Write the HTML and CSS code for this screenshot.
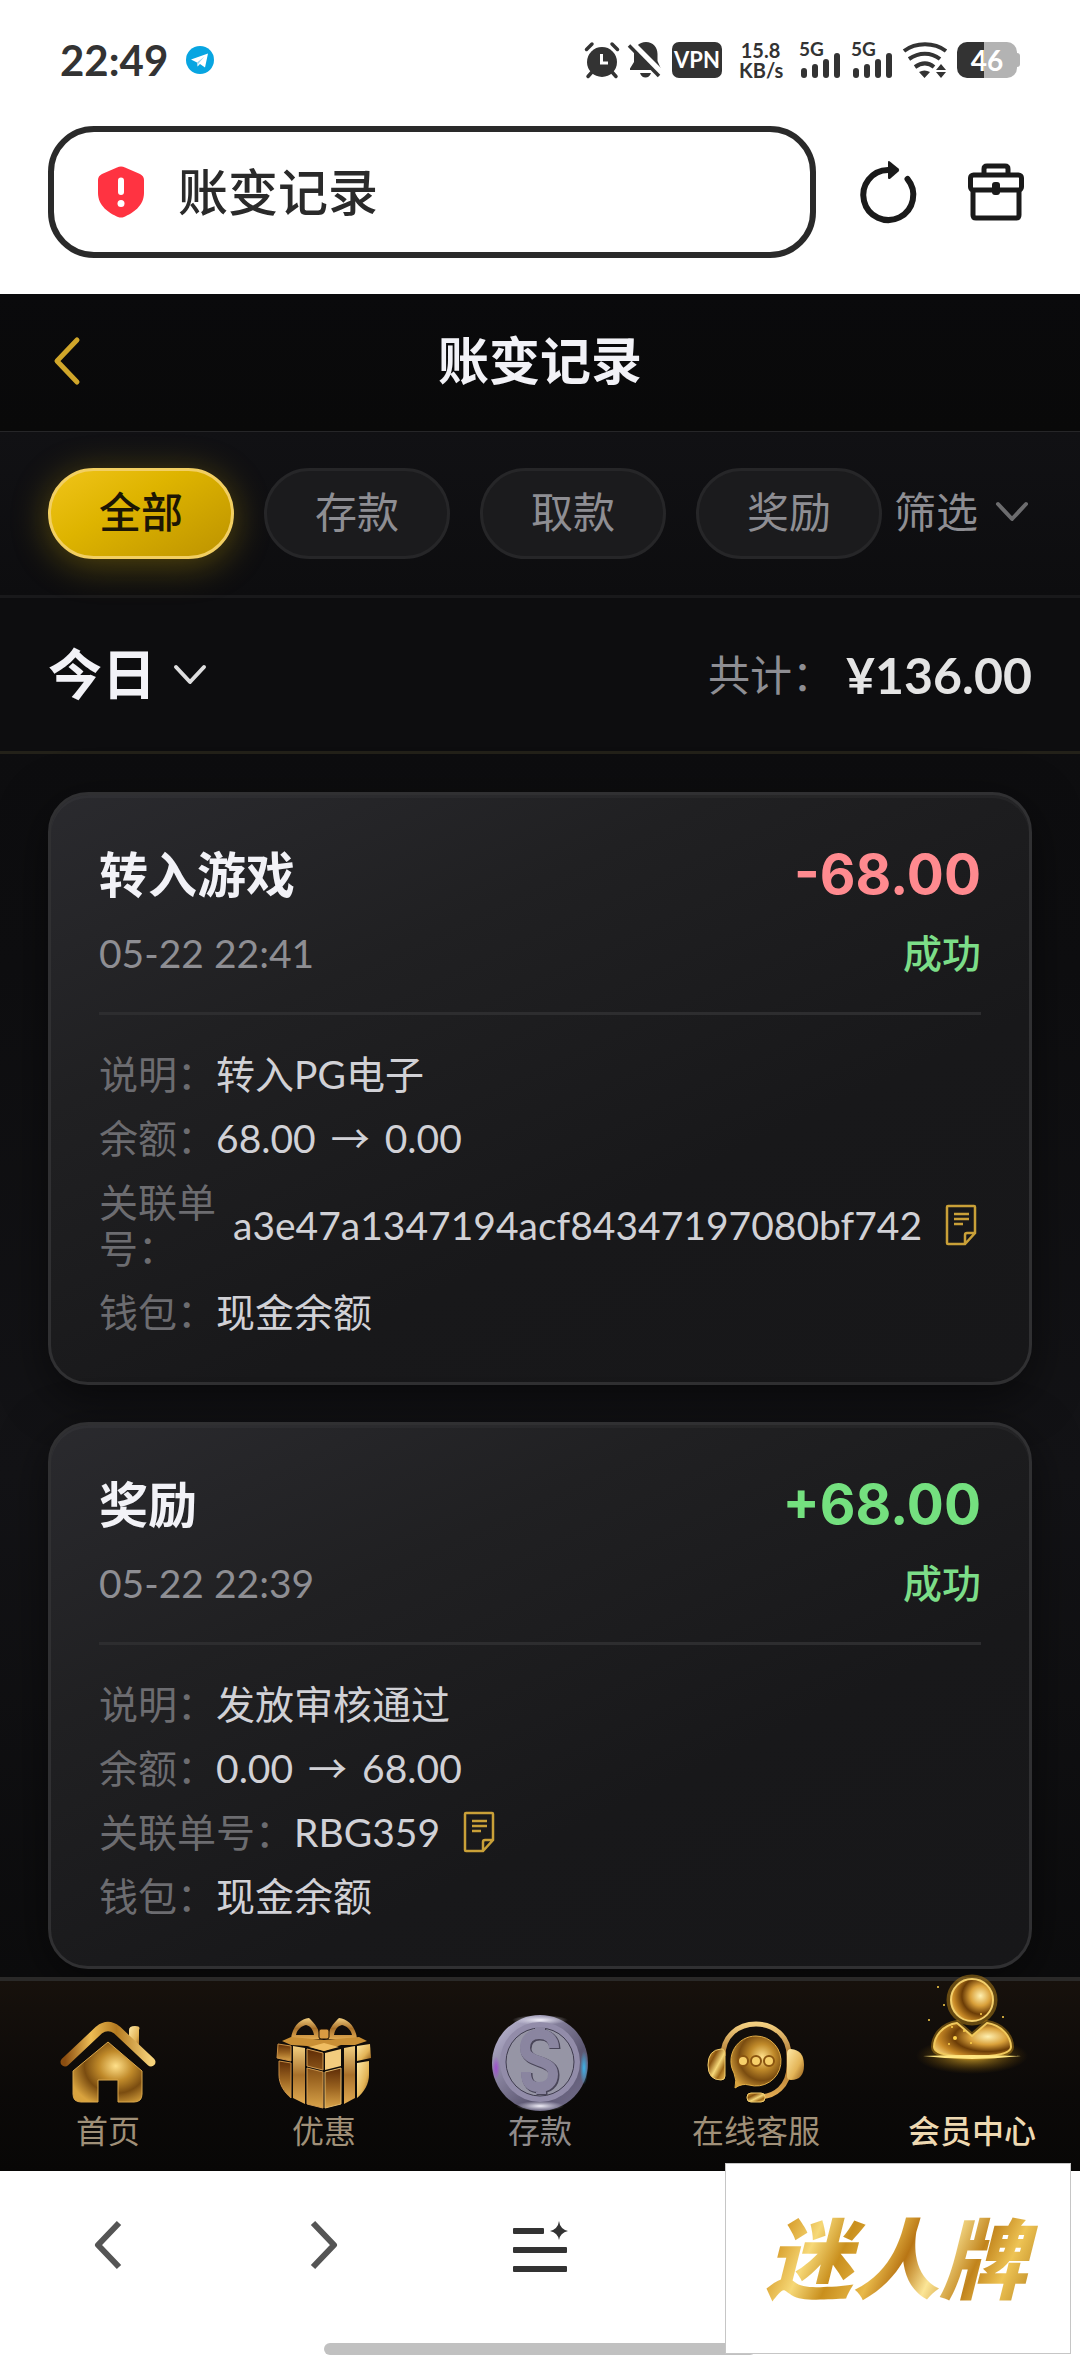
FILE: index.html
```
<!DOCTYPE html>
<html lang="zh-CN">
<head>
  <meta charset="UTF-8">
  <meta name="viewport" content="width=device-width, initial-scale=1.0">
  <title>账变记录</title>
  <link rel="stylesheet" href="styles.css">
</head>
<body>

  <!-- Phone status bar -->
  <div class="status-bar">
    <span class="time">22:49</span>
    <svg class="telegram" width="28" height="28" viewBox="0 0 28 28">
      <circle cx="14" cy="14" r="14" fill="#08a5e1"/>
      <path d="M5 13.5 22 7.5 19 21.5 14 18 11.5 20.5 11 16.5Z" fill="#fff"/>
      <path d="M11 16.5 18.5 10.5 12.5 17.5 11.5 20.5Z" fill="#9bd3ee"/>
    </svg>
    <div class="status-icons">
      <svg width="34" height="36" viewBox="0 0 34 36">
        <circle cx="17" cy="20" r="15" fill="#333"/>
        <path d="M1.500 7.500 7 2M32.500 7.500 27 2M7 30 3 34.500M27 30 31 34.500" stroke="#333" stroke-width="3.500" stroke-linecap="round"/>
        <path d="M16.500 12V21H23" fill="none" stroke="#fff" stroke-width="3"/>
      </svg>
      <svg width="33" height="36" viewBox="0 0 33 36">
        <path d="M17 0C24 0 28.500 5 28.500 12V19L32 27V28H1V26.500L5 20V12C5 5 10 0 17 0ZM11 31H22C21 34 19 35.500 16.500 35.500S12 34 11 31Z" fill="#333"/>
        <path d="M2 1 33 32" stroke="#fff" stroke-width="7"/>
        <path d="M0 3.500 30 34" stroke="#333" stroke-width="3.500"/>
      </svg>
      <span class="vpn">VPN</span>
      <span class="speed">15.8<br>KB/s</span>
      <svg class="signal" width="42" height="36" viewBox="0 0 42 36">
        <text x="0" y="14">5G</text>
        <rect x="2" y="26" width="6" height="10" rx="3"/>
        <rect x="13" y="22" width="6" height="14" rx="3"/>
        <rect x="24" y="17" width="6" height="19" rx="3"/>
        <rect x="35" y="11" width="6" height="25" rx="3"/>
      </svg>
      <svg class="signal" width="42" height="36" viewBox="0 0 42 36">
        <text x="0" y="14">5G</text>
        <rect x="2" y="26" width="6" height="10" rx="3"/>
        <rect x="13" y="22" width="6" height="14" rx="3"/>
        <rect x="24" y="17" width="6" height="19" rx="3"/>
        <rect x="35" y="11" width="6" height="25" rx="3"/>
      </svg>
      <svg width="44" height="36" viewBox="0 0 44 36">
        <g fill="none" stroke="#333" stroke-width="4">
          <path d="M1 9C13 0 31 0 43 9"/>
          <path d="M6 17C16 10 28 10 37 17"/>
          <path d="M12 25C19 20 25 20 31 25"/>
        </g>
        <path d="M16 30Q21.500 27 27 30L21.500 36ZM33 28 38 22 43 28ZM33 30 38 36 43 30Z" fill="#333"/>
      </svg>
      <span class="battery">46</span>
    </div>
  </div>

  <!-- Browser address row -->
  <div class="address-row">
    <label class="address">
      <svg width="46" height="52" viewBox="0 0 46 52">
        <path d="M19 1.500Q23-.5 27 1.500L42 8Q46 10 46 14V27C46 40 35 47 26 51Q23 52 20 51C11 47 0 40 0 27V14Q0 10 4 8Z" fill="#ff3341"/>
        <path d="M23 14.500V26" stroke="#fff" stroke-width="6" stroke-linecap="round"/>
        <circle cx="23" cy="37.500" r="3.500" fill="#fff"/>
      </svg>
      <input type="text" value="账变记录" aria-label="地址">
    </label>
    <button class="tool" aria-label="刷新">
      <svg width="56" height="62" viewBox="0 0 56 62">
        <path d="M28 9A25 25 0 1 0 47.500 18" fill="none" stroke="#1a1a1a" stroke-width="6" stroke-linecap="round"/>
        <path d="M28 1.500Q28-1 30.500 1L38.500 7.500Q40 9 38.500 10.500L30.500 17.500Q28 19 28 16.500Z" fill="#1a1a1a"/>
      </svg>
    </button>
    <button class="tool" aria-label="工具箱">
      <svg width="56" height="58" viewBox="0 0 56 58" fill="none" stroke="#1a1a1a" stroke-width="5">
        <path d="M16 11V6Q16 3 19 3H37Q40 3 40 6V11"/>
        <rect x="2.500" y="12" width="51" height="15" rx="3"/>
        <path d="M5 27V52Q5 55 8 55H48Q51 55 51 52V27"/>
        <rect x="24" y="19" width="8" height="13" rx="3" fill="#1a1a1a" stroke="none"/>
      </svg>
    </button>
  </div>

  <main class="app">
    <header class="header">
      <button class="back" aria-label="返回">
        <svg width="26" height="46" viewBox="0 0 26 46"><path d="M23 2 3 23 23 44" fill="none" stroke="#d0a62a" stroke-width="5" stroke-linecap="round" stroke-linejoin="round"/></svg>
      </button>
      <h1>账变记录</h1>
    </header>

    <div class="tabs">
      <button class="tab active">全部</button>
      <button class="tab">存款</button>
      <button class="tab">取款</button>
      <button class="tab">奖励</button>
      <button class="filter">筛选
        <svg width="32" height="20" viewBox="0 0 32 20"><path d="M2 2 16 17 30 2" fill="none" stroke="#6c6c6e" stroke-width="4" stroke-linecap="round" stroke-linejoin="round"/></svg>
      </button>
    </div>

    <div class="summary">
      <button class="day">今日
        <svg width="32" height="20" viewBox="0 0 32 20"><path d="M2 2 16 17 30 2" fill="none" stroke="#dededf" stroke-width="4" stroke-linecap="round" stroke-linejoin="round"/></svg>
      </button>
      <span class="total-label">共计：</span>
      <span class="total">¥136.00</span>
    </div>

    <div class="records">
      <article class="card">
        <div class="card-head">
          <h2>转入游戏</h2>
          <span class="amount minus">-68.00</span>
          <time>05-22 22:41</time>
          <span class="state">成功</span>
        </div>
        <dl>
          <div class="row"><dt>说明：</dt><dd>转入PG电子</dd></div>
          <div class="row"><dt>余额：</dt><dd>68.00 <span class="arrow">→</span> 0.00</dd></div>
          <div class="row long"><dt>关联单号：</dt><dd>a3e47a1347194acf84347197080bf742</dd>
            <button class="copy" aria-label="复制">
              <svg width="32" height="42" viewBox="0 0 32 42"><path d="M3 2H29Q30 2 30 3V29L20 40H3Q2 40 2 39V3Q2 2 3 2ZM20 40V31Q20 29 22 29H30M9 10H24M9 15H24M9 20H18" fill="none" stroke="#c9a038" stroke-width="2.500"/></svg>
            </button>
          </div>
          <div class="row"><dt>钱包：</dt><dd>现金余额</dd></div>
        </dl>
      </article>

      <article class="card">
        <div class="card-head">
          <h2>奖励</h2>
          <span class="amount plus">+68.00</span>
          <time>05-22 22:39</time>
          <span class="state">成功</span>
        </div>
        <dl>
          <div class="row"><dt>说明：</dt><dd>发放审核通过</dd></div>
          <div class="row"><dt>余额：</dt><dd>0.00 <span class="arrow">→</span> 68.00</dd></div>
          <div class="row"><dt>关联单号：</dt><dd>RBG359</dd>
            <button class="copy" aria-label="复制">
              <svg width="32" height="42" viewBox="0 0 32 42"><path d="M3 2H29Q30 2 30 3V29L20 40H3Q2 40 2 39V3Q2 2 3 2ZM20 40V31Q20 29 22 29H30M9 10H24M9 15H24M9 20H18" fill="none" stroke="#c9a038" stroke-width="2.500"/></svg>
            </button>
          </div>
          <div class="row"><dt>钱包：</dt><dd>现金余额</dd></div>
        </dl>
      </article>
    </div>
  </main>

  <nav class="tabbar">
    <a href="#">
      <svg width="98" height="98" viewBox="0 0 98 98">
        <defs>
          <linearGradient id="gold" x1="0" y1="0" x2="1" y2="1">
            <stop offset="0" stop-color="#e0a83a"/><stop offset=".3" stop-color="#8a5410"/>
            <stop offset=".55" stop-color="#f6d879"/><stop offset=".75" stop-color="#a06a18"/><stop offset="1" stop-color="#f0c057"/>
          </linearGradient>
          <linearGradient id="goldDark" x1="0" y1="0" x2="0" y2="1">
            <stop offset="0" stop-color="#5e2c06"/><stop offset=".5" stop-color="#9a6320"/><stop offset="1" stop-color="#d9a349"/>
          </linearGradient>
          <linearGradient id="goldLight" x1="0" y1="0" x2="1" y2="1">
            <stop offset="0" stop-color="#ffe9a6"/><stop offset=".6" stop-color="#e3b457"/><stop offset="1" stop-color="#8c5514"/>
          </linearGradient>
          <linearGradient id="goldBand" x1="0" y1="0" x2="0" y2="1">
            <stop offset="0" stop-color="#f3cf80"/><stop offset=".5" stop-color="#a8702a"/><stop offset="1" stop-color="#e2ab52"/>
          </linearGradient>
          <radialGradient id="houseGold" cx=".62" cy=".4" r=".7">
            <stop offset="0" stop-color="#ffe08a"/><stop offset=".35" stop-color="#c08a2a"/>
            <stop offset=".65" stop-color="#7a4c10"/><stop offset="1" stop-color="#d9a33e"/>
          </radialGradient>
          <linearGradient id="roof" x1="0" y1="1" x2="1" y2="1">
            <stop offset="0" stop-color="#8a4d10"/><stop offset=".3" stop-color="#eebd54"/>
            <stop offset=".6" stop-color="#b47a20"/><stop offset="1" stop-color="#f5d27a"/>
          </linearGradient>
        </defs>
        <path d="M70 16Q70 12 76 12T80 16V36L70 27Z" fill="url(#goldLight)"/>
        <path d="M6 48 40 16Q49 9 58 16L92 48" fill="none" stroke="url(#roof)" stroke-width="9" stroke-linecap="round"/>
        <path d="M49 28 83 57V80Q83 88 75 88H59V66H39V88H22Q14 88 14 80V57Z" fill="url(#houseGold)" stroke="#d9a64a" stroke-width="1"/>
      </svg>
      <span>首页</span>
    </a>
    <a href="#">
      <svg width="98" height="98" viewBox="0 0 98 98">
        <path d="M45 25H16C17 13 25 5 34 4 39 9 45 15 45 25ZM39 21C38 15 35 12 31 11 26 12 22 16 21 21Z" fill="url(#goldBand)" fill-rule="evenodd"/>
        <path d="M53 25H82C81 13 73 5 64 4 59 9 53 15 53 25ZM59 21C60 15 63 12 67 11 72 12 76 16 77 21Z" fill="url(#goldBand)" fill-rule="evenodd"/>
        <rect x="44" y="15" width="10" height="10" rx="2" fill="#d99b42" stroke="#1a0e04"/>
        <path d="M7 27 16 23 49 26 84 23 92 27 80 31 66 31 49 37 32 32 16 31Z" fill="#c98f35"/>
        <path d="M3 30 16 32V47L2 44Z" fill="url(#goldDark)" stroke="#c98f44"/>
        <path d="M95 30 82 32V47L96 44Z" fill="url(#goldLight)"/>
        <path d="M4 47 16 49V84C9 78 4 70 4 61Z" fill="url(#goldDark)" stroke="#c98f44"/>
        <path d="M94 47 82 49V84C89 78 94 70 94 61Z" fill="url(#goldLight)"/>
        <path d="M18 32 30 34V90L18 84Z" fill="url(#goldBand)"/>
        <path d="M80 32 69 34V90L80 84Z" fill="url(#goldBand)"/>
        <path d="M32 35 48 39V56L32 52ZM32 54 48 58V94L32 90Z" fill="url(#goldDark)" stroke="#d39b50"/>
        <path d="M66 35 50 39V56L66 52Z" fill="#f3cc7e"/>
        <path d="M66 54 50 58V94L66 90Z" fill="url(#goldDark)" stroke="#e5ba6b"/>
        <path d="M34 33 49 29 64 33 49 37Z" fill="#efbd62"/>
      </svg>
      <span>优惠</span>
    </a>
    <a href="#" class="silver">
      <svg width="98" height="98" viewBox="0 0 98 98">
        <defs>
          <linearGradient id="rim" x1="0" y1="0" x2="1" y2="1">
            <stop offset="0" stop-color="#c9c5df"/><stop offset=".3" stop-color="#8f8aa6"/>
            <stop offset=".65" stop-color="#5d5872"/><stop offset="1" stop-color="#77718f"/>
          </linearGradient>
          <radialGradient id="purple"><stop offset="0" stop-color="#a04fd0"/><stop offset="1" stop-color="#a04fd0" stop-opacity="0"/></radialGradient>
          <radialGradient id="cyan"><stop offset="0" stop-color="#3bb4ea"/><stop offset="1" stop-color="#3bb4ea" stop-opacity="0"/></radialGradient>
          <radialGradient id="shine"><stop offset="0" stop-color="#f3f1fa"/><stop offset="1" stop-color="#d5d3e5" stop-opacity="0"/></radialGradient>
        </defs>
        <circle cx="49" cy="49" r="48" fill="url(#rim)"/>
        <ellipse cx="5" cy="54" rx="4" ry="12" fill="url(#purple)"/>
        <ellipse cx="93" cy="54" rx="4" ry="17" fill="url(#cyan)"/>
        <ellipse cx="49" cy="92" rx="24" ry="5" fill="url(#shine)"/>
        <ellipse cx="49" cy="6" rx="28" ry="5" fill="url(#shine)"/>
        <circle cx="49" cy="48" r="40" fill="#928ca9"/>
        <circle cx="49" cy="48" r="34" fill="#9695a5" stroke="#3f3c4e" stroke-width="1"/>
        <path d="M64 35C64 25 57 21 49 21S35 26 35 35C35 51 63 45 63 61 63 70 57 74 49 74S36 70 36 59M50 14V22M51 74V81" fill="none" stroke="#494558" stroke-width="11"/>
        <path d="M63 34C63 24 56 20 48 20S34 25 34 34C34 50 62 44 62 60 62 69 56 73 48 73S35 69 35 58M49 13V21M50 73V80" fill="none" stroke="#8a85a0" stroke-width="10"/>
      </svg>
      <span>存款</span>
    </a>
    <a href="#">
      <svg width="98" height="98" viewBox="0 0 98 98">
        <path d="M16 42C16 22 31 10 49 10S82 22 82 42V52C82 72 68 83 51 83" fill="none" stroke="url(#goldBand)" stroke-width="5"/>
        <path d="M14 35Q1 36 1 51T14 66Q18 66 18 62V40Q18 35 14 35Z" fill="url(#gold)" stroke="#f3cd6d"/>
        <path d="M84 35Q97 36 97 51T84 66Q80 66 80 62V40Q80 35 84 35Z" fill="url(#goldLight)"/>
        <path d="M49 22A25 25 0 1 1 42 71Q35 69 28 74 30 66 27 59A25 25 0 0 1 49 22Z" fill="url(#houseGold)" stroke="#e0ac45"/>
        <g fill="#f7d06a" stroke="#8a5410" stroke-width="2"><circle cx="36" cy="47" r="5"/><circle cx="49" cy="47" r="5"/><circle cx="62" cy="47" r="5"/></g>
        <rect x="40" y="79" width="18" height="9" rx="4" fill="url(#gold)" stroke="#f3cd6d"/>
      </svg>
      <span>在线客服</span>
    </a>
    <a href="#" class="current">
      <svg width="98" height="98" viewBox="0 0 98 98">
        <defs>
          <radialGradient id="glow"><stop offset="0" stop-color="#ffc93a" stop-opacity=".8"/><stop offset="1" stop-color="#8a5a00" stop-opacity="0"/></radialGradient>
          <radialGradient id="ball" cx=".7" cy=".4" r=".8">
            <stop offset="0" stop-color="#fff0b0"/><stop offset=".3" stop-color="#d9a03a"/>
            <stop offset=".55" stop-color="#6b3c06"/><stop offset=".8" stop-color="#c98a26"/><stop offset="1" stop-color="#f5d27a"/>
          </radialGradient>
        </defs>
        <ellipse cx="49" cy="42" rx="56" ry="18" fill="url(#glow)"/>
        <circle cx="49" cy="-14" r="23" fill="none" stroke="#b88418" stroke-opacity=".5" stroke-width="5"/>
        <circle cx="49" cy="-14" r="21" fill="url(#ball)" stroke="#f3cf6b" stroke-width="2"/>
        <path d="M34 9 49 22 64 9C78 11 88 22 88 33 88 38 80 42 49 43 18 42 11 38 11 33 11 22 20 11 34 9Z" fill="none" stroke="#b88418" stroke-opacity=".5" stroke-width="6"/>
        <path d="M34 9 49 22 64 9C78 11 88 22 88 33 88 38 80 42 49 43 18 42 11 38 11 33 11 22 20 11 34 9Z" fill="url(#ball)" stroke="#f0c85c" stroke-width="2"/>
        <path d="M0 42Q49 40 98 42 49 48 0 42Z" fill="#ffe680"/>
        <g fill="#ffd24a"><circle cx="21" cy="-9" r="1"/><circle cx="15" cy="-27" r="1"/><circle cx="6" cy="6" r="1"/><circle cx="29" cy="13" r="1"/><circle cx="32" cy="24" r="2"/><circle cx="41" cy="17" r="1"/><circle cx="48" cy="29" r="1"/><circle cx="80" cy="3" r="1"/><circle cx="26" cy="30" r="1"/><circle cx="58" cy="0" r="1"/></g>
      </svg>
      <span>会员中心</span>
    </a>
  </nav>

  <!-- Browser toolbar -->
  <div class="browser-bar">
    <button aria-label="后退">
      <svg width="28" height="48" viewBox="0 0 28 48"><path d="M25 2 4 24 25 46" fill="none" stroke="#555" stroke-width="6" stroke-linejoin="round"/></svg>
    </button>
    <button aria-label="前进">
      <svg width="28" height="48" viewBox="0 0 28 48"><path d="M3 2 24 24 3 46" fill="none" stroke="#555" stroke-width="6" stroke-linejoin="round"/></svg>
    </button>
    <button aria-label="菜单">
      <svg width="56" height="52" viewBox="0 0 56 52" fill="#333">
        <rect x="1" y="7" width="31" height="6" rx="1"/>
        <rect x="1" y="26" width="54" height="6" rx="1"/>
        <rect x="1" y="45" width="54" height="6" rx="1"/>
        <path d="M47 0Q48 8 56 10 48 12 47 19 46 12 38 10 46 8 47 0Z"/>
      </svg>
    </button>
    <div class="home-line"></div>
  </div>

  <div class="watermark"><span>迷人牌</span></div>

</body>
</html>
```
FILE: styles.css
```
* {
  box-sizing: border-box;
}
body {
  margin: 0;
  min-height: 100vh;
  display: flex;
  flex-direction: column;
  position: relative;
  background: #fff;
  font-family: Lato, "Noto Sans CJK SC", sans-serif;
  font-size: 39px;
  line-height: 46px;
  overflow-x: hidden;
}
button {
  padding: 0;
  border: 0;
  background: none;
  font: inherit;
  color: inherit;
}
svg {
  display: block;
  flex: none;
  overflow: visible;
}
h1, h2, dl, dd {
  margin: 0;
}

/* status bar */
.status-bar {
  display: flex;
  align-items: center;
  padding: 36px 60px 42px;
  height: 126px;
  color: #333;
}
.time {
  font-size: 42px;
  font-weight: 700;
}
.telegram {
  margin-left: 18px;
}
.status-icons {
  display: flex;
  align-items: center;
  gap: 10px;
  margin-left: auto;
}
.vpn {
  width: 50px;
  height: 36px;
  border-radius: 7px;
  background: #333;
  color: #fff;
  font-size: 22px;
  font-weight: 700;
  line-height: 36px;
  text-align: center;
}
.speed {
  width: 43px;
  margin: 0 7px;
  font-size: 20px;
  font-weight: 700;
  line-height: 20px;
  text-align: center;
}
.signal {
  fill: #333;
  font-size: 19px;
  font-weight: 700;
}
.battery {
  width: 60px;
  height: 36px;
  margin-right: 3px;
  border-radius: 10px;
  background: linear-gradient(90deg, #333 45%, #b3b3b3 45%);
  color: #fff;
  font-size: 28px;
  font-weight: 700;
  line-height: 36px;
  text-align: center;
  position: relative;
}
.battery::after {
  content: "";
  position: absolute;
  top: 11px;
  right: -3px;
  width: 3px;
  height: 14px;
  border-radius: 0 3px 3px 0;
  background: #b3b3b3;
}

/* address row */
.address-row {
  display: flex;
  align-items: center;
  padding: 0 56px 36px 48px;
}
.address {
  flex: 1;
  min-width: 0;
  height: 132px;
  display: flex;
  align-items: center;
  gap: 34px;
  padding: 0 44px;
  border: 6px solid #2a2a2a;
  border-radius: 46px;
}
.address input {
  flex: 1;
  min-width: 0;
  padding: 0;
  border: 0;
  outline: 0;
  background: none;
  color: #2a2a2a;
  font: inherit;
  font-size: 50px;
  font-weight: 500;
  line-height: 64px;
}
.tool {
  margin-left: 44px;
}
.tool + .tool {
  margin-left: 52px;
}

/* app */
.app {
  flex: 1;
  background: linear-gradient(#0b0b0d, #0e0e10 40%, #131316 70%, #0c0c0d);
  color: #f2f2f7;
}
.header {
  height: 138px;
  display: grid;
  grid-template-columns: 1fr auto 1fr;
  align-items: center;
  padding: 0 54px 4px;
  border-bottom: 1px solid #262628;
  background: linear-gradient(#0a0a0c, #090909);
}
.header h1 {
  font-size: 51px;
  font-weight: 700;
  line-height: 64px;
}
.tabs {
  display: flex;
  align-items: center;
  gap: 30px;
  padding: 36px 48px;
  height: 166px;
  border-bottom: 3px solid #19191b;
  background: linear-gradient(#111114, #0d0d0f);
  font-size: 42px;
}
.tab {
  flex: 0 0 186px;
  height: 91px;
  padding-bottom: 4px;
  border: 3px solid #262628;
  border-radius: 46px;
  background: #1b1b1d;
  color: #8e8e93;
}
.tab.active {
  border-color: #f2cf62;
  background: linear-gradient(150deg, #f0c419, #deb400 40%, #bd9300);
  box-shadow: 0 6px 36px rgba(222, 180, 0, .35);
  color: #1c1604;
  font-weight: 500;
}
.filter {
  display: flex;
  align-items: center;
  gap: 18px;
  margin-left: -18px;
  padding-bottom: 3px;
  color: #8e8e93;
  white-space: nowrap;
}
.summary {
  display: flex;
  align-items: center;
  height: 156px;
  padding: 0 48px;
  border-bottom: 3px solid #232119;
  background: #0d0d0f;
}
.day {
  display: flex;
  align-items: center;
  gap: 18px;
  margin-right: auto;
  font-size: 54px;
  font-weight: 700;
  line-height: 64px;
}
.total-label {
  color: #8e8e93;
  font-size: 42px;
}
.total {
  margin-left: 12px;
  color: #e4e4e4;
  font-size: 50px;
  font-weight: 700;
}

/* records */
.records {
  display: flex;
  flex-direction: column;
  gap: 37px;
  padding: 38px 48px 8px;
}
.card {
  padding: 48px 48px 47px;
  border: 3px solid #303032;
  border-radius: 40px;
  background: linear-gradient(155deg, #2a2a2e, #202022 30%, #18181a 65%, #171719);
  box-shadow: 0 12px 48px rgba(0, 0, 0, .5), inset 0 3px 0 rgba(255, 255, 255, .03);
}
.card-head {
  display: grid;
  grid-template-columns: 1fr auto;
  align-items: center;
  row-gap: 25px;
  padding-bottom: 36px;
  border-bottom: 3px solid #2d2d2f;
}
.card-head h2 {
  font-size: 49px;
  font-weight: 700;
  line-height: 62px;
}
.amount {
  font-family: Inter, sans-serif;
  font-size: 55px;
  font-weight: 700;
  line-height: 62px;
}
.minus {
  color: #ff8a8f;
}
.plus {
  color: #74e07f;
}
.card-head time {
  color: #8e8e93;
}
.state {
  justify-self: end;
  color: #7cdd88;
  font-weight: 500;
}
.card dl {
  display: flex;
  flex-direction: column;
  gap: 18px;
  padding-top: 36px;
}
.row {
  display: flex;
  align-items: center;
  height: 46px;
}
.row dt {
  flex: none;
  color: #6c6c70;
}
.row dd {
  color: #d1d1d6;
}
.row.long {
  height: auto;
}
.row.long dt {
  width: 134px;
}
.arrow {
  margin: 0 5px;
  font-family: "Noto Sans CJK SC", sans-serif;
  line-height: 0;
}
.copy {
  margin-left: 23px;
}

/* app tab bar */
.tabbar {
  display: grid;
  grid-template-columns: repeat(5, 1fr);
  height: 194px;
  padding-top: 33px;
  border-top: 4px solid #2a2928;
  background: linear-gradient(#17110c, #0b0908 60%, #080706);
}
.tabbar a {
  display: flex;
  flex-direction: column;
  align-items: center;
  color: #a09078;
  font-size: 32px;
  line-height: 38px;
  text-decoration: none;
  white-space: nowrap;
}
.tabbar .silver {
  color: #8f8b8b;
}
.tabbar .current {
  color: #eed9b2;
  font-weight: 500;
}

/* browser toolbar */
.browser-bar {
  display: grid;
  grid-template-columns: repeat(5, 1fr);
  align-items: start;
  justify-items: center;
  height: 205px;
  padding-top: 50px;
  position: relative;
}
.home-line {
  position: absolute;
  bottom: 21px;
  left: 30%;
  width: 40%;
  height: 12px;
  border-radius: 6px;
  background: #c1c1c1;
}
.watermark {
  position: absolute;
  right: 9px;
  bottom: 22px;
  width: 346px;
  height: 191px;
  display: flex;
  align-items: center;
  justify-content: center;
  border: 1px solid #c6c6c6;
  background: #fff;
}
.watermark span {
  padding: 0 12px 0 8px;
  background: linear-gradient(115deg, #a8700f, #d9a02e 12%, #f6d877 22%, #c98f1d 32%, #e8b94a 44%, #b87514 52%, #fbe596 62%, #c1831b 74%, #eec455 84%, #a8700f);
  -webkit-background-clip: text;
  background-clip: text;
  color: transparent;
  font-size: 87px;
  font-style: italic;
  font-weight: 900;
  line-height: 110px;
}
```
